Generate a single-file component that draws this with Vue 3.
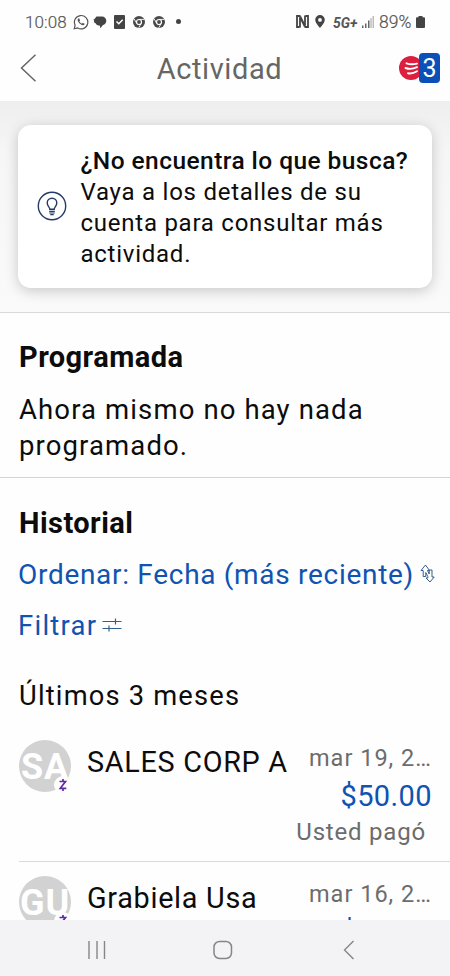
<script setup>
const transactions = [
  { initials: 'SA', name: 'SALES CORP A', date: 'mar 19, 2…', amount: '$50.00', note: 'Usted pagó' },
  { initials: 'GU', name: 'Grabiela Usa', date: 'mar 16, 2…', amount: '$', note: '' },
]
</script>

<template>
  <div class="screen">
    <div class="status">
      <div class="status-left">
        <span class="clock">10:08</span>
        <svg class="wa" width="16" height="16" viewBox="0 0 16 16" fill="none" stroke="#555" stroke-width="1.2">
          <path d="M1.2 14.8l.9-3.6A6.7 6.7 0 1 1 4.7 14z" />
          <path d="M5.2 4.5c-.9.8-.7 2.2.4 3.8 1.300 1.900 3.200 3.100 4.600 2.900.9-.1 1.400-.8 1.300-1.500L9.800 8.800l-.9 1C7.700 9.300 6.900 8.500 6.300 7.300l.8-.9-.8-1.900z" fill="#555" stroke="none" />
        </svg>
        <svg class="chat" width="14" height="14" viewBox="0 0 14 14" fill="#444">
          <path d="M3.500 1.500H9A4.300 4.300 0 0 1 13.300 5.800c0 2.200-1.400 3.700-3.300 4.300L7.300 13.300 6.800 10.600C4.600 10.600 3.200 9.700 2.600 8.200L.8 7.300 1.300 6 .3 4.800 1.500 4z" />
        </svg>
        <svg class="check" width="11" height="14" viewBox="0 0 11 14">
          <rect width="11" height="14" rx="1" fill="#444" />
          <path d="M2.500 6.500l2.300 2.300 3.900-4" fill="none" stroke="#fff" stroke-width="1.500" />
        </svg>
        <svg v-for="n in 2" :key="n" class="chrome" width="12" height="12" viewBox="0 0 12 12">
          <circle cx="6" cy="6" r="6" fill="#4a4a4a" />
          <circle cx="6" cy="6" r="2.500" fill="#4a4a4a" stroke="#fff" stroke-width="1.200" />
          <path d="M6 3.400h5.300M3.700 7.300L1.200 3M8.300 7.300L5.700 11.800" stroke="#fff" stroke-width=".9" />
        </svg>
        <i class="dot"></i>
      </div>
      <div class="status-right">
        <svg class="nfc" width="13" height="13" viewBox="0 0 13 13" fill="none" stroke="#444">
          <path d="M4.500 1H1v11h2.500M8.500 12H12V1H9.500" stroke-width="1.800" />
          <path d="M4 12.500V3M9 10V.5" stroke-width="1.800" />
          <path d="M4 1.500l5 10" stroke-width="2.200" />
        </svg>
        <svg class="pin" width="10" height="13" viewBox="0 0 10 13">
          <path d="M5 0a4.800 4.800 0 0 0-4.800 4.800C.2 8 5 13 5 13s4.800-5 4.800-8.200A4.800 4.800 0 0 0 5 0zm0 3a1.900 1.900 0 1 1 0 3.800A1.900 1.900 0 0 1 5 3z" fill="#444" />
        </svg>
        <span class="net">5G+</span>
        <svg class="bars" width="12" height="12" viewBox="0 0 12 12" fill="#666">
          <path d="M0 9.500h1.500V12H0zM3 7.500h1.500V12H3zM6 4.500h1.500V12H6z" />
          <path d="M8.300 2h1.400v10H8.300zM10.500 0H12v12h-1.500z" fill="#bbb" />
        </svg>
        <span class="pct">89%</span>
        <svg class="batt" width="9" height="12" viewBox="0 0 9 12" fill="#444">
          <path d="M2.500 0h4v1.200H8q1 0 1 1V11q0 1-1 1H1q-1 0-1-1V2.200q0-1 1-1h1.500z" />
        </svg>
      </div>
    </div>

    <header class="header">
      <svg class="back" width="17" height="28" viewBox="0 0 17 28" fill="none" stroke="#666" stroke-width="1.500">
        <path d="M15.500 .7L1.500 14l14 13.300" />
      </svg>
      <h1 class="title">Actividad</h1>
      <div class="brand">
        <svg width="23" height="24" viewBox="0 0 23 24">
          <circle cx="12" cy="12" r="12" fill="#dc1f3e" />
          <g fill="none" stroke="#fff" stroke-width="1.900" stroke-linecap="round">
            <path d="M7.500 7.300c3.500 1.300 6.500 1.200 10.500.3M6.500 12c4 1.500 7.500 1 11.500-.8M9 17.300c3 .6 6-.2 9-2" />
          </g>
        </svg>
        <span class="count">3</span>
      </div>
    </header>

    <main class="content">
      <section class="promo">
        <div class="card">
          <svg class="bulb" width="30" height="30" viewBox="0 0 30 30" fill="none" stroke="#263a68" stroke-width="1.400">
            <circle cx="15" cy="15" r="13.700" />
            <path d="M12.800 18.300c0-2.500-2.600-3-2.600-6.300a4.800 4.800 0 0 1 9.600 0c0 3.300-2.600 3.800-2.600 6.300z" />
            <path d="M12.200 20.300h5.600M12.200 22h5.600M13.300 23.700h3.400" stroke-width="1.200" />
          </svg>
          <div class="card-text">
            <strong class="ask">¿No encuentra lo que busca?</strong>
            <p class="tip">Vaya a los detalles de su<br>cuenta para consultar más<br>actividad.</p>
          </div>
        </div>
      </section>

      <section class="scheduled">
        <h2 class="h-prog">Programada</h2>
        <p class="empty">Ahora mismo no hay nada<br>programado.</p>
      </section>

      <section class="history">
        <h2 class="h-hist">Historial</h2>
        <div class="action sort">
          <span>Ordenar: Fecha (más reciente)</span>
          <svg width="15" height="19" viewBox="0 0 15 19" fill="none" stroke="#345f88" stroke-width="1">
            <path d="M5.500 1L1 6.500h2.200V12.500h2.600V8.500l2 4v1.500H6l4 4 4.200-5h-2.200V6H9.200v4L7.500 6.500h2z" stroke-linejoin="round" />
          </svg>
        </div>
        <div class="action filter">
          <span>Filtrar</span>
          <svg width="20" height="14" viewBox="0 0 20 14" fill="none" stroke="#345f88" stroke-width="1.200">
            <path d="M.5 3.500h19M.5 10.500h19M13.500 .5v6M7 7.500v6" />
          </svg>
        </div>
        <p class="period">Últimos 3 meses</p>
        <ul class="list">
          <li v-for="t in transactions" :key="t.name" class="row">
            <div class="avatar">
              <span class="initials">{{ t.initials }}</span>
              <svg class="zelle" width="18" height="18" viewBox="0 0 18 18">
                <circle cx="9" cy="9" r="9" fill="#fefefe" />
                <path d="M5.500 5.500h6L6.300 12.300h6M9 3v2.500M9 12.300V15" fill="none" stroke="#6028a4" stroke-width="1.700" />
              </svg>
            </div>
            <span class="name">{{ t.name }}</span>
            <div class="meta">
              <span class="date">{{ t.date }}</span>
              <span class="amount" :class="{ partial: !t.note }">{{ t.amount }}</span>
              <span v-if="t.note" class="note">{{ t.note }}</span>
            </div>
          </li>
        </ul>
      </section>
    </main>

    <nav class="nav">
      <svg width="18" height="18" viewBox="0 0 18 18" stroke="#85858a" stroke-width="1.400"><path d="M1 0v18M9 0v18M16.500 0v18" /></svg>
      <svg class="home" width="20" height="20" viewBox="0 0 20 20" fill="none" stroke="#85858a" stroke-width="1.500"><rect x="1" y="1.500" width="17.500" height="17" rx="5.500" /></svg>
      <svg width="12" height="20" viewBox="0 0 12 20" fill="none" stroke="#85858a" stroke-width="1.400"><path d="M10.500 1L1.500 10l9 9" /></svg>
    </nav>
  </div>
</template>

<style>
body { margin: 0; background: #fefefe; }
</style>

<style scoped>
.screen { width: 450px; height: 976px; display: flex; flex-direction: column; overflow: hidden; background: #fefefe; font-family: Roboto, "Liberation Sans", sans-serif; color: #0c0c0c; }
h1, h2, p, ul { margin: 0; padding: 0; font-weight: 400; }
.status { flex: none; height: 42px; box-sizing: border-box; padding: 1px 24px 0 25px; display: flex; justify-content: space-between; align-items: center; color: #555; }
.status-left, .status-right { display: flex; align-items: center; }
.clock { font-size: 17px; font-weight: 300; letter-spacing: .1px; width: 47.500px; white-space: nowrap; -webkit-text-stroke: .2px #555; }
.chat { margin-left: 4px; }
.check { margin-left: 7px; }
.chrome { margin-left: 8px; }
.dot { width: 5px; height: 5px; border-radius: 50%; background: #444; margin-left: 11px; }
.pin { margin-left: 6px; }
.net { font-size: 14px; font-weight: 700; font-style: italic; margin-left: 8px; width: 29px; padding-top: 3px; }
.pct { font-size: 17.500px; font-weight: 300; margin-left: 5px; width: 37px; -webkit-text-stroke: .2px #555; }
.batt { margin-left: 0; }
.status-right { margin-right: 1px; }
.header { flex: none; height: 59px; box-sizing: border-box; padding: 0 10px 8px 20px; display: grid; grid-template-columns: 41px 1fr 41px; align-items: center; }
.title { text-align: center; font-size: 29px; line-height: 36px; color: #666; letter-spacing: .6px; padding: 2px 21px 0 0; }
.brand { display: flex; align-items: center; padding-top: 1px; }
.brand svg { flex: none; margin-right: -3px; }
.count { flex: none; position: relative; width: 21px; height: 30px; border-radius: 4px; background: #0b50b8; color: #fff; font-size: 25px; line-height: 32px; text-align: center; }
.content { flex: 1; min-height: 0; overflow: hidden; }
.promo { height: 212px; box-sizing: border-box; padding: 24px 18px; border-bottom: 1.500px solid #d9d9d9; background: linear-gradient(#eeeeee, #f6f6f6 25%, #fafafa); }
.card { height: 163px; border-radius: 13px; background: #fff; box-shadow: 0 3px 14px rgba(0, 0, 0, .2); display: flex; align-items: center; padding-left: 19px; }
.bulb { margin-top: -1px; margin-left: -.5px; }
.card-text { margin-left: 14px; padding-top: 3px; line-height: 31.400px; white-space: nowrap; }
.ask { display: block; font-size: 24.500px; font-weight: 500; letter-spacing: .44px; }
.tip { font-size: 24px; letter-spacing: .75px; }
.scheduled { height: 165px; box-sizing: border-box; padding: 26px 19px 0; border-bottom: 1.500px solid #d5d5d5; }
.h-prog, .h-hist { font-size: 29px; line-height: 36px; font-weight: 700; letter-spacing: .45px; }
.h-hist { margin-left: 1px; }
.empty { margin-top: 17px; font-size: 27.500px; line-height: 36.400px; letter-spacing: 1.120px; white-space: nowrap; }
.history { padding: 27px 0 0 18px; }
.action { display: flex; align-items: center; margin-top: 15px; height: 36px; line-height: 36px; color: #1053b0; white-space: nowrap; }
.sort { margin-top: 16px; font-size: 28px; letter-spacing: .7px; }
.sort svg { margin-left: 6px; margin-top: -4px; }
.filter { font-size: 27.500px; letter-spacing: 1.250px; }
.filter svg { margin-left: 5px; margin-top: -3px; }
.period { margin: 34px 0 0 1px; font-size: 27.300px; line-height: 36px; letter-spacing: 1.180px; }
.list { list-style: none; margin: 12px 0 0 1px; }
.row { height: 136px; box-sizing: border-box; border-bottom: 1.500px solid #dadada; padding: 14px 18px 0 0; display: flex; align-items: flex-start; }
.avatar { flex: none; position: relative; width: 52px; height: 52px; border-radius: 50%; background: #d2d2d2; }
.initials { display: block; text-align: center; font-size: 36px; font-weight: 700; line-height: 54px; letter-spacing: .8px; color: #fff; }
.zelle { position: absolute; left: 35px; top: 36px; }
.name { margin: 4px 0 0 16px; font-size: 28.800px; line-height: 36px; letter-spacing: .7px; white-space: nowrap; }
.meta { margin: 3px 0 0 auto; display: flex; flex-direction: column; align-items: flex-end; white-space: nowrap; color: #6c6c6c; }
.date { font-size: 23.500px; line-height: 30px; letter-spacing: 1px; }
.amount { margin-top: 4px; font-size: 29px; line-height: 38px; letter-spacing: .4px; color: #1053b0; }
.partial { width: 91px; }
.note { margin: 2px 6px 0 0; font-size: 24px; line-height: 30px; letter-spacing: .8px; }
.nav { flex: none; height: 56px; background: #f3f3f6; box-sizing: border-box; padding: 3px 95px 0 88px; display: flex; justify-content: space-between; align-items: center; }
.home { margin-right: 4px; }
</style>
